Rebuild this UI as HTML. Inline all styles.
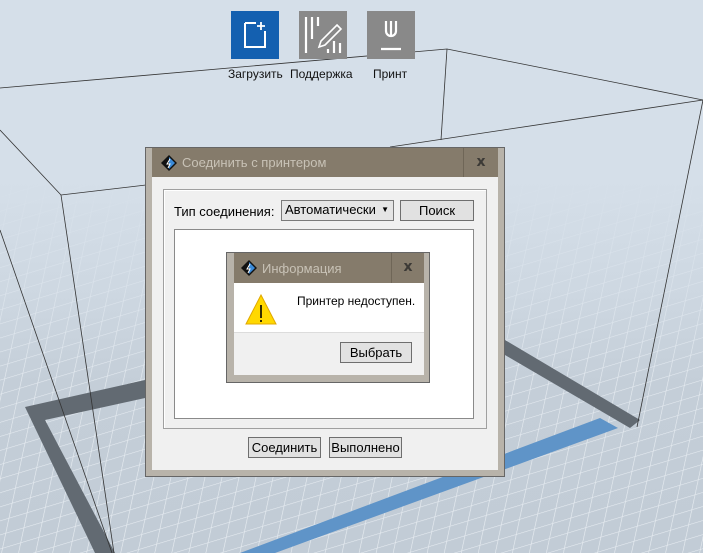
<!DOCTYPE html>
<html><head><meta charset="utf-8"><style>
*{margin:0;padding:0;box-sizing:border-box}
body{width:703px;height:553px;overflow:hidden;background:#d5dfe9;font-family:"Liberation Sans",sans-serif;font-size:12px;color:#000;position:relative}
.abs{position:absolute}
.btn{position:absolute;background:#e1e1e1;border:1px solid #6e6e6e;text-align:center;font-size:12px;line-height:16px}
.tb{position:absolute;width:48px;height:48px;top:11px}
.lbl{position:absolute;top:67px;font-size:12px;color:#111;white-space:nowrap}
.x{font-family:"DejaVu Sans",sans-serif}
</style></head><body>
<svg class="abs" style="left:0;top:0" width="703" height="553">
<defs>
<pattern id="g" width="16" height="16" patternUnits="userSpaceOnUse" patternTransform="skewX(-30) rotate(-20)">
<rect width="16" height="16" fill="#c2ccd6"/>
<path d="M0 0H16M0 0V16" stroke="#e8edf2" stroke-width="1.2"/>
</pattern>
<linearGradient id="fade" x1="0" y1="0" x2="0" y2="1">
<stop offset="0" stop-color="#d5dfe9" stop-opacity="1"/>
<stop offset="0.3" stop-color="#d5dfe9" stop-opacity="0.6"/>
<stop offset="0.55" stop-color="#d5dfe9" stop-opacity="0.1"/>
<stop offset="1" stop-color="#d5dfe9" stop-opacity="0"/>
</linearGradient>
</defs>
<rect x="0" y="180" width="703" height="373" fill="url(#g)"/>
<rect x="0" y="180" width="703" height="373" fill="url(#fade)"/>
<polygon points="25,407 145,380 145,398 45,420 115,553 95,553" fill="#626a72"/>
<polygon points="505,340 640,420 630,428 505,355" fill="#626a72"/>
<polygon points="600,418 618,428 275,553 240,553" fill="#5f94c8"/>
<g stroke="#333" stroke-width="0.8" fill="none">
<path d="M0 88L447 49L703 100"/>
<path d="M447 49L441 140"/>
<path d="M390 147L703 100"/>
<path d="M0 130L61 195L146 185"/>
<path d="M61 195L114 553"/>
<path d="M0 230L112 553"/>
<path d="M703 100L637 427"/>
</g>
</svg>

<div class="tb" style="left:231px;background:#1460b0">
<svg width="48" height="48"><g stroke="#fff" stroke-width="2" fill="none"><path d="M14 12H25M14 12V36H34V20"/><path d="M30 11V19M26 15H34" stroke-width="1.8"/></g></svg>
</div>
<div class="tb" style="left:299px;background:#898989">
<svg width="48" height="48"><g stroke="#fff" stroke-width="2.2" fill="none"><path d="M7 6V42M13 6V28M19 6V15"/><path d="M38 14L42 18L26 34L20 36L22 30Z" stroke-width="1.6"/><path d="M35 30V42M41 32V42M29 38V42"/></g></svg>
</div>
<div class="tb" style="left:367px;background:#898989">
<svg width="48" height="48"><g stroke="#fff" stroke-width="2.2" fill="none"><path d="M19 10V20A5 5 0 0 0 29 20V10"/><path d="M24 10V24"/><path d="M14 38H34"/></g></svg>
</div>
<div class="lbl" style="left:228px">Загрузить</div>
<div class="lbl" style="left:290px">Поддержка</div>
<div class="lbl" style="left:373px">Принт</div>

<!-- main dialog -->
<div class="abs" style="left:145px;top:147px;width:360px;height:330px;background:#b8b3aa;border:1px solid #666"></div>
<div class="abs" style="left:152px;top:148px;width:346px;height:29px;background:#857b6b"></div>
<div class="abs x" style="left:463px;top:148px;width:35px;height:29px;border-left:1px solid #6f6657;color:#3c3a36;font-weight:bold;font-size:14px;text-align:center;line-height:28px">x</div>
<svg class="abs" style="left:161px;top:155px" width="16" height="16"><path d="M8 0L16 8L8 16L0 8Z" fill="#111"/><path d="M8 2L14 8L8 14Z" fill="#3a8ad8"/><path d="M9 4L6 9H9L7 13" stroke="#fff" stroke-width="1" fill="none"/></svg>
<div class="abs" style="left:182px;top:155px;color:#c8c2b6;font-size:13px">Соединить с принтером</div>
<div class="abs" style="left:152px;top:177px;width:346px;height:293px;background:#f0f0f0"></div>
<div class="abs" style="left:163px;top:189px;width:324px;height:240px;border:1px solid #a0a0a0;box-shadow:inset 1px 1px 0 #fff"></div>
<div class="abs" style="left:174px;top:204px;font-size:13px">Тип соединения:</div>
<div class="abs" style="left:281px;top:200px;width:113px;height:21px;background:#e5e5e5;border:1px solid #7a7a7a;font-size:13px;padding-left:3px;line-height:18px">Автоматически<span style="position:absolute;right:4px;top:0;font-size:8px">▼</span></div>
<div class="btn" style="left:400px;top:200px;width:74px;height:21px;font-size:13px;line-height:20px">Поиск</div>
<div class="abs" style="left:174px;top:229px;width:300px;height:190px;background:#fff;border:1px solid #8a8a8a"></div>
<div class="btn" style="left:248px;top:437px;width:73px;height:21px;font-size:13px;line-height:20px">Соединить</div>
<div class="btn" style="left:329px;top:437px;width:73px;height:21px;font-size:13px;line-height:20px">Выполнено</div>

<!-- info dialog -->
<div class="abs" style="left:226px;top:252px;width:204px;height:131px;background:#b8b3aa;border:1px solid #666"></div>
<div class="abs" style="left:234px;top:253px;width:190px;height:30px;background:#857b6b"></div>
<div class="abs x" style="left:391px;top:253px;width:33px;height:30px;border-left:1px solid #6f6657;color:#3c3a36;font-weight:bold;font-size:14px;text-align:center;line-height:28px">x</div>
<svg class="abs" style="left:241px;top:260px" width="16" height="16"><path d="M8 0L16 8L8 16L0 8Z" fill="#111"/><path d="M8 2L14 8L8 14Z" fill="#3a8ad8"/><path d="M9 4L6 9H9L7 13" stroke="#fff" stroke-width="1" fill="none"/></svg>
<div class="abs" style="left:262px;top:261px;color:#c8c2b6;font-size:13px">Информация</div>
<div class="abs" style="left:234px;top:283px;width:190px;height:50px;background:#fff;border-bottom:1px solid #dcdcdc"></div>
<div class="abs" style="left:234px;top:333px;width:190px;height:42px;background:#f0f0f0"></div>
<svg class="abs" style="left:244px;top:293px" width="34" height="34"><path d="M17 2L32 31H2Z" fill="#ffd800" stroke="#e0a800" stroke-width="1"/><path d="M17 12V25M17 27V29" stroke="#000" stroke-width="1.6"/></svg>
<div class="abs" style="left:297px;top:294px;font-size:12px">Принтер недоступен.</div>
<div class="btn" style="left:340px;top:342px;width:72px;height:21px;font-size:13px;line-height:20px">Выбрать</div>
</body></html>
